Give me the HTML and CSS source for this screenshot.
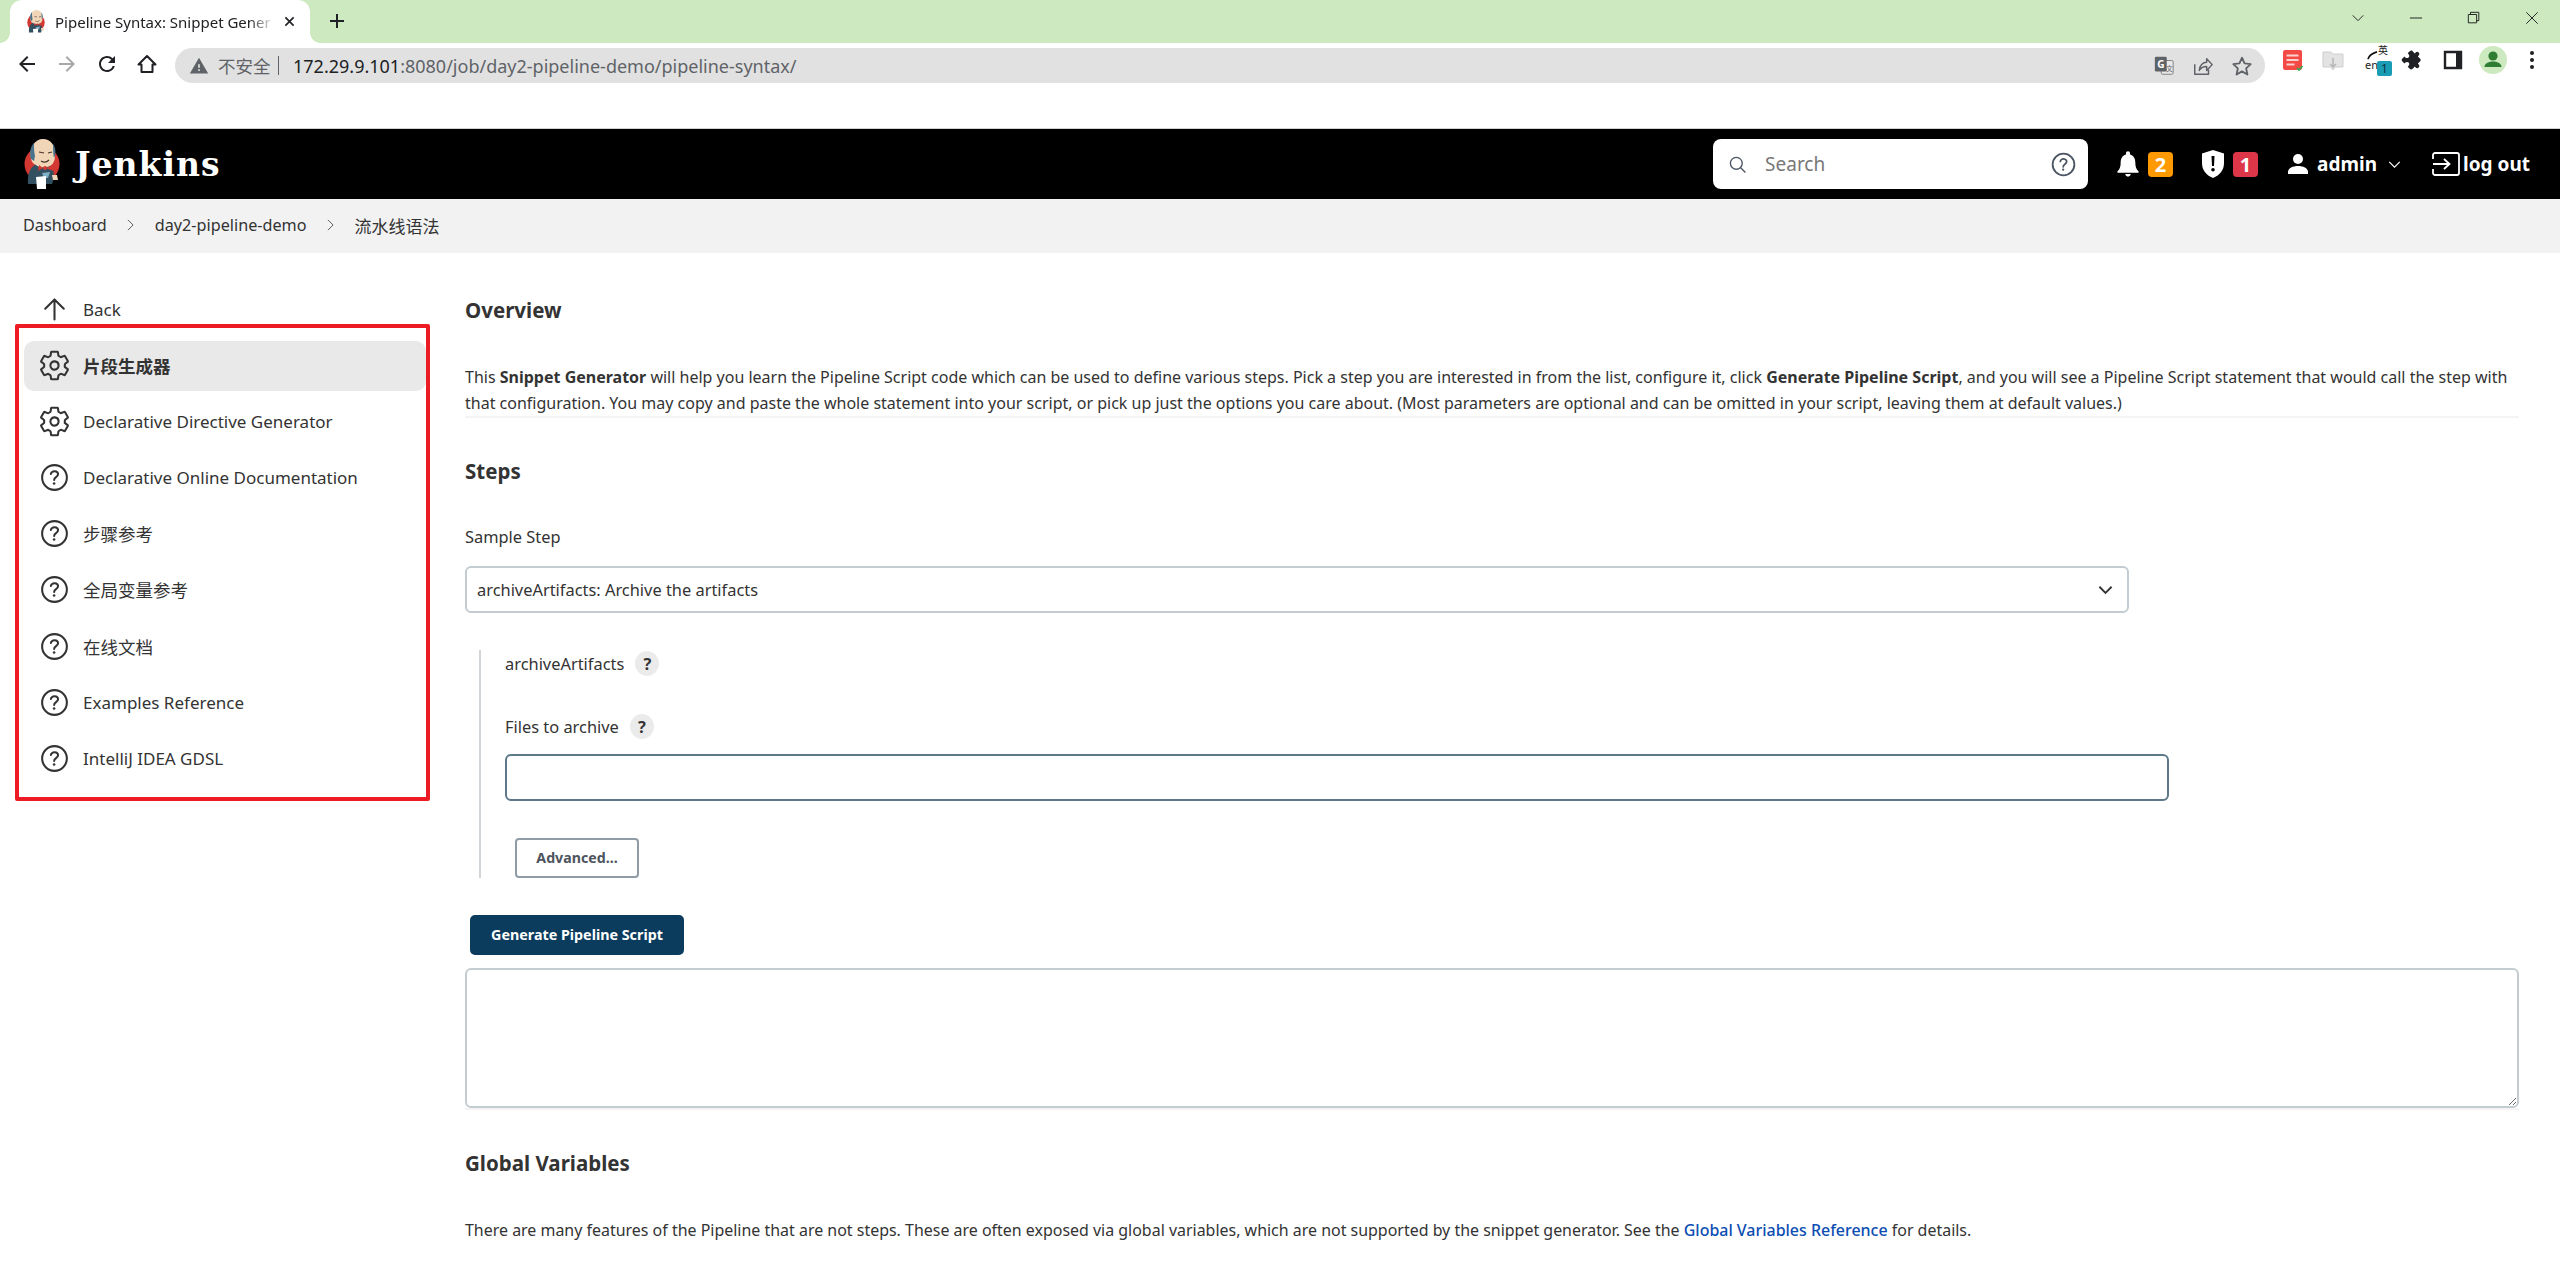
FILE: index.html
```html
<!DOCTYPE html>
<html lang="en">
<head>
<meta charset="utf-8">
<title>Pipeline Syntax: Snippet Generator</title>
<link rel="stylesheet" href="styles.css">
</head>
<body>
<svg class="defs" width="0" height="0" aria-hidden="true">
  <defs>
    <symbol id="butler" viewBox="0 0 40 54">
      <circle cx="20" cy="27" r="17.5" fill="#d33833"/>
      <path d="M6 47 C5 38 8 29 15 27 L29 29 C33 33 32 42 30 47 Z" fill="#335061"/>
      <path d="M9 22 C7 10 13 2 21 2 C29 2 34 9 33 19 C33 25 30 29 25 30 C20 31 16 30 14 28 C11 27 10 25 9 22 Z" fill="#f0d6b7"/>
      <path d="M9 22 C7 15 9 9 12 6 C12 11 12 15 13 19 L12 24 Z" fill="#49728b"/>
      <path d="M31 7 C34 11 34 17 32 21 C31 17 31 12 31 7 Z" fill="#49728b"/>
      <path d="M17 15 L22 16 M26 16 L30 15" stroke="#49322b" stroke-width="1.2" fill="none"/>
      <path d="M19 24 C22 26 25 25 27 23" stroke="#49322b" stroke-width="1.2" fill="none"/>
      <path d="M21 31 L17 28 L16 34 Z M24 31 L31 28 L31 34 Z" fill="#d33833"/>
      <circle cx="23" cy="31" r="2" fill="#d33833"/>
      <path d="M20 36 L28 35 L26 41 L22 41 Z" fill="#81b0c4"/>
      <path d="M14 40 L24 39 L24 52 L15 52 Z" fill="#fff"/>
      <path d="M30 38 L35 38 L36 43 L31 43 Z" fill="#f0d6b7"/>
    </symbol>
    <symbol id="gear" viewBox="0 0 512 512">
      <path fill="none" stroke="currentColor" stroke-width="32" stroke-linecap="round" stroke-linejoin="round" d="M262.29 192.31a64 64 0 1057.4 57.4 64.13 64.13 0 00-57.4-57.4zM416.39 256a154.34 154.34 0 01-1.53 20.79l45.21 35.46a10.81 10.81 0 012.45 13.75l-42.77 74a10.81 10.81 0 01-13.14 4.59l-44.9-18.08a16.11 16.11 0 00-15.17 1.75A164.48 164.48 0 01325 400.8a15.94 15.94 0 00-8.82 12.14l-6.73 47.89a11.08 11.08 0 01-10.68 9.17h-85.54a11.11 11.11 0 01-10.69-8.87l-6.72-47.82a16.07 16.07 0 00-9-12.22 155.3 155.3 0 01-21.46-12.57 16 16 0 00-15.11-1.71l-44.89 18.07a10.81 10.81 0 01-13.14-4.58l-42.77-74a10.8 10.8 0 012.45-13.75l38.21-30a16.05 16.05 0 006-14.08c-.36-4.17-.58-8.33-.58-12.5s.21-8.27.58-12.35a16 16 0 00-6.07-13.94l-38.19-30A10.81 10.81 0 0149.48 186l42.77-74a10.81 10.81 0 0113.14-4.59l44.9 18.08a16.11 16.11 0 0015.17-1.75A164.48 164.48 0 01187 111.2a15.94 15.94 0 008.82-12.14l6.73-47.89A11.08 11.08 0 01213.23 42h85.54a11.11 11.11 0 0110.69 8.87l6.72 47.82a16.07 16.07 0 009 12.22 155.3 155.3 0 0121.46 12.57 16 16 0 0015.11 1.71l44.89-18.07a10.81 10.81 0 0113.14 4.58l42.77 74a10.8 10.8 0 01-2.45 13.75l-38.21 30a16.05 16.05 0 00-6.05 14.08c.33 4.14.55 8.3.55 12.47z"/>
    </symbol>
    <symbol id="help" viewBox="0 0 512 512">
      <path fill="none" stroke="currentColor" stroke-width="32" stroke-miterlimit="10" d="M256 64C150 64 64 150 64 256s86 192 192 192 192-86 192-192S362 64 256 64z"/>
      <path fill="none" stroke="currentColor" stroke-width="32" stroke-linecap="round" stroke-miterlimit="10" d="M200 202.29s.84-17.5 19.57-32.57C230.68 160.77 244 158.18 256 158c10.93-.14 20.69 1.67 26.53 4.45 10 4.76 29.47 16.38 29.47 41.09 0 26-17 37.81-36.37 50.8S251 281.43 251 296"/>
      <circle cx="250" cy="348" r="20" fill="currentColor"/>
    </symbol>
  </defs>
</svg>

<div class="tabstrip">
  <div class="tab">
    <svg class="favicon"><use href="#butler"/></svg>
    <span class="tab-title">Pipeline Syntax: Snippet Gener</span>
    <svg class="tab-close" viewBox="0 0 12 12"><path d="M1.5 1.5l9 9M10.5 1.5l-9 9"/></svg>
  </div>
  <svg class="new-tab" viewBox="0 0 16 16"><path d="M8 1v14M1 8h14"/></svg>
  <div class="window-controls">
    <svg class="win-icon" viewBox="0 0 16 16"><path d="M2 5l6 6 6-6"/></svg>
    <svg class="win-icon" viewBox="0 0 16 16"><path d="M1 8h14"/></svg>
    <svg class="win-icon" viewBox="0 0 16 16"><path d="M4 4V1.5h9.5V11H11M1.5 4H11v9.5H1.5z"/></svg>
    <svg class="win-icon" viewBox="0 0 16 16"><path d="M1.5 1.5l13 13M14.5 1.5l-13 13"/></svg>
  </div>
</div>

<div class="toolbar">
  <div class="nav-buttons">
    <svg class="nav-icon" viewBox="0 0 24 24"><path d="M20 11H7.83l5.59-5.59L12 4l-8 8 8 8 1.41-1.41L7.83 13H20z"/></svg>
    <svg class="nav-icon nav-off" viewBox="0 0 24 24"><path d="M4 11h12.17l-5.59-5.59L12 4l8 8-8 8-1.41-1.41L16.17 13H4z"/></svg>
    <svg class="nav-icon" viewBox="0 0 24 24"><path d="M17.65 6.35A7.958 7.958 0 0012 4c-4.42 0-7.99 3.58-7.99 8s3.57 8 7.99 8c3.73 0 6.84-2.55 7.73-6h-2.08A5.99 5.99 0 0112 18c-3.31 0-6-2.69-6-6s2.69-6 6-6c1.66 0 3.14.69 4.22 1.78L13 11h7V4l-2.35 2.35z"/></svg>
    <svg class="nav-icon nav-home" viewBox="0 0 24 24"><path d="M12 4L3.5 12.5h3V20h11v-7.5h3z"/></svg>
  </div>
  <div class="omnibox">
    <svg class="omni-warning" viewBox="0 0 24 24"><path d="M1 21h22L12 2 1 21zm12-3h-2v-2h2v2zm0-4h-2v-4h2v4z"/></svg>
    <span class="omni-insecure">不安全</span>
    <span class="omni-sep"></span>
    <span class="omni-url"><span class="omni-host">172.29.9.101</span>:8080/job/day2-pipeline-demo/pipeline-syntax/</span>
    <div class="omni-actions">
      <svg class="omni-icon" viewBox="0 0 24 24">
        <rect x="9" y="6" width="13" height="15" rx="1.5" fill="#e8e8e8" stroke="#7d7d7d"/>
        <rect x="2" y="2" width="13" height="16" rx="1.5" fill="#5f6368"/>
        <text x="8.5" y="14" class="omni-g">G</text>
        <text x="18" y="17.5" class="omni-t">文</text>
      </svg>
      <svg class="omni-icon omni-line" viewBox="0 0 24 24"><path d="M3 10v11h15v-5M8 17c0-6 4-9 8-9V4l6 6.5-6 6.5v-4.500c-4 0-6 1-8 4z"/></svg>
      <svg class="omni-icon omni-line omni-star" viewBox="0 0 24 24"><path d="M12 3l2.800 6.200 6.700.8-5 4.600 1.400 6.700L12 17.900l-5.900 3.400 1.400-6.700-5-4.600 6.700-.8z"/></svg>
    </div>
  </div>
  <div class="extensions">
    <svg class="ext-icon" viewBox="0 0 24 24">
      <rect x="3" y="2" width="19" height="20" rx="2" fill="#f44a45"/>
      <path d="M6.500 7.500h12M6.500 12h12M6.500 16.500h8" stroke="#fbd0ce" stroke-width="2"/>
      <path d="M17 20l2 2 3.500-4" stroke="#3aa757" stroke-width="1.800" fill="none"/>
    </svg>
    <svg class="ext-icon" viewBox="0 0 24 24">
      <path d="M2 4h8l2 2h10v13H14l-2 3-2-3H2z" fill="#e3e3e3" stroke="#cfcfcf"/>
      <path d="M12 10v9M9 16l3 3 3-3" stroke="#b5b5b5" stroke-width="1.500" fill="none"/>
    </svg>
    <div class="ext-dict">
      <span class="dict-zh">英</span>
      <span class="dict-en">en</span>
      <svg class="dict-arrow" viewBox="0 0 12 10"><path d="M1 9C2 5 5 3 11 1"/></svg>
      <span class="dict-badge">1</span>
    </div>
    <svg class="ext-icon ext-puzzle" viewBox="0 0 24 24"><path d="M20.5 11H19V7c0-1.100-.9-2-2-2h-4V3.500C13 2.120 11.880 1 10.500 1S8 2.120 8 3.500V5H4c-1.100 0-1.990.9-1.990 2v3.800H3.500c1.490 0 2.700 1.210 2.700 2.700s-1.210 2.700-2.700 2.700H2V20c0 1.100.9 2 2 2h3.800v-1.500c0-1.490 1.210-2.700 2.700-2.700 1.490 0 2.700 1.210 2.700 2.700V22H17c1.100 0 2-.9 2-2v-4h1.500c1.380 0 2.500-1.120 2.500-2.500S21.880 11 20.500 11z"/></svg>
    <svg class="ext-icon" viewBox="0 0 24 24"><path d="M4 4h16v16H4z" fill="none" stroke="#202124" stroke-width="2.400"/><path d="M15 4h5v16h-5z" fill="#202124"/></svg>
    <svg class="avatar" viewBox="0 0 28 28">
      <circle cx="14" cy="14" r="14" fill="#cde9bf"/>
      <circle cx="14" cy="10" r="4.600" fill="#2e7d32"/>
      <path d="M5.500 21c0-4 5-5.500 8.500-5.500s8.500 1.500 8.500 5.500z" fill="#2e7d32"/>
    </svg>
    <svg class="ext-dots" viewBox="0 0 6 24"><circle cx="3" cy="5" r="2"/><circle cx="3" cy="12" r="2"/><circle cx="3" cy="19" r="2"/></svg>
  </div>
</div>
<div class="bookmark-gap"></div>

<header class="page-header">
  <div class="brand">
    <svg class="brand-logo"><use href="#butler"/></svg>
    <span class="brand-name">Jenkins</span>
  </div>
  <div class="header-tools">
    <div class="search-box">
      <svg class="search-icon" viewBox="0 0 24 24"><circle cx="10.500" cy="10.500" r="7.500"/><path d="M16 16l6 6"/></svg>
      <span class="search-placeholder">Search</span>
      <svg class="search-help"><use href="#help"/></svg>
    </div>
    <div class="monitor monitor-bell">
      <svg class="monitor-icon" viewBox="0 0 24 28"><path d="M12 0c1.300 0 2.200.9 2.200 2.200v1.300C18.500 4.600 20 8.500 20 12.500c0 4.500 1 7 3.500 9.500v1.500H.5V22C3 19.500 4 17 4 12.500c0-4 1.500-7.900 5.800-9V2.200C9.800.9 10.700 0 12 0zM9 25h6c0 1.500-1.300 2.800-3 2.800S9 26.500 9 25z"/></svg>
      <span class="badge badge-warn">2</span>
    </div>
    <div class="monitor monitor-shield">
      <svg class="monitor-icon" viewBox="0 0 24 28"><path fill-rule="evenodd" d="M12 0l11 3.500V13c0 7-4 12-11 15C5 25 1 20 1 13V3.500zM10.500 6l.5 10h2l.5-10zM12 18a1.800 1.800 0 100 3.600 1.800 1.800 0 000-3.600z"/></svg>
      <span class="badge badge-danger">1</span>
    </div>
    <div class="user-menu">
      <svg class="user-icon" viewBox="0 0 20 20"><circle cx="10" cy="5" r="5"/><path d="M0 20v-2c0-4 5-6 10-6s10 2 10 6v2z"/></svg>
      <span class="user-name">admin</span>
      <svg class="user-caret" viewBox="0 0 14 8"><path d="M1 1l6 6 6-6"/></svg>
    </div>
    <div class="logout">
      <svg class="logout-icon" viewBox="0 0 28 24"><path d="M1 7V3a2 2 0 012-2h22a2 2 0 012 2v18a2 2 0 01-2 2H3a2 2 0 01-2-2v-4M1 12h16M12 7l5.500 5-5.500 5"/></svg>
      <span class="logout-text">log out</span>
    </div>
  </div>
</header>

<nav class="breadcrumb">
  <span>Dashboard</span>
  <svg class="crumb-sep" viewBox="0 0 8 14"><path d="M1 1l6 6-6 6"/></svg>
  <span>day2-pipeline-demo</span>
  <svg class="crumb-sep" viewBox="0 0 8 14"><path d="M1 1l6 6-6 6"/></svg>
  <span class="crumb-zh">流水线语法</span>
</nav>

<div class="layout">
  <aside class="sidebar">
    <div class="annotation"></div>
    <a class="side-item"><svg class="side-icon" viewBox="0 0 512 512"><path fill="none" stroke="currentColor" stroke-width="32" stroke-linecap="round" stroke-linejoin="round" d="M112 244l144-144 144 144M256 120v292"/></svg><span>Back</span></a>
    <a class="side-item side-active"><svg class="side-icon"><use href="#gear"/></svg><span class="side-zh">片段生成器</span></a>
    <a class="side-item"><svg class="side-icon"><use href="#gear"/></svg><span>Declarative Directive Generator</span></a>
    <a class="side-item"><svg class="side-icon"><use href="#help"/></svg><span>Declarative Online Documentation</span></a>
    <a class="side-item"><svg class="side-icon"><use href="#help"/></svg><span class="side-zh">步骤参考</span></a>
    <a class="side-item"><svg class="side-icon"><use href="#help"/></svg><span class="side-zh">全局变量参考</span></a>
    <a class="side-item"><svg class="side-icon"><use href="#help"/></svg><span class="side-zh">在线文档</span></a>
    <a class="side-item"><svg class="side-icon"><use href="#help"/></svg><span>Examples Reference</span></a>
    <a class="side-item"><svg class="side-icon"><use href="#help"/></svg><span>IntelliJ IDEA GDSL</span></a>
  </aside>

  <main class="content">
    <h2 class="section-title">Overview</h2>
    <p class="intro">This <strong>Snippet Generator</strong> will help you learn the Pipeline Script code which can be used to define various steps. Pick a step you are interested in from the list, configure it, click <strong>Generate Pipeline Script</strong>, and you will see a Pipeline Script statement that would call the step with<br>that configuration. You may copy and paste the whole statement into your script, or pick up just the options you care about. (Most parameters are optional and can be omitted in your script, leaving them at default values.)</p>

    <h2 class="section-title steps-title">Steps</h2>
    <div class="field-label sample-label">Sample Step</div>
    <div class="select-wrap">
      <select class="step-select"><option>archiveArtifacts: Archive the artifacts</option></select>
      <svg class="select-caret" viewBox="0 0 16 10"><path d="M1.500 1.500L8 8l6.500-6.500"/></svg>
    </div>

    <div class="step-config">
      <div class="config-row"><span>archiveArtifacts</span><span class="help-dot">?</span></div>
      <div class="config-row files-row"><span>Files to archive</span><span class="help-dot">?</span></div>
      <input class="files-input" type="text">
      <button class="btn-advanced" type="button">Advanced...</button>
    </div>

    <button class="btn-generate" type="button">Generate Pipeline Script</button>
    <div class="output-wrap"><textarea class="snippet-output" readonly></textarea></div>

    <h2 class="section-title globals-title">Global Variables</h2>
    <p class="globals-text">There are many features of the Pipeline that are not steps. These are often exposed via global variables, which are not supported by the snippet generator. See the <a class="link">Global Variables Reference</a> for details.</p>
  </main>
</div>
</body>
</html>
```

FILE: styles.css
```css
* { box-sizing: border-box; }

html, body {
  margin: 0;
  padding: 0;
  width: 2560px;
  height: 1288px;
  overflow: hidden;
  background: #fff;
  color: #333;
  font-family: "Noto Sans", "Noto Sans CJK SC", sans-serif;
  font-size: 16px;
}

.defs { position: absolute; }

/* Browser chrome */
.tabstrip {
  height: 43px;
  background: #cce9bf;
  display: flex;
  align-items: flex-start;
  padding-left: 10px;
}

.tab {
  position: relative;
  width: 300px;
  height: 43px;
  background: #fff;
  border-radius: 12px 12px 0 0;
  display: flex;
  align-items: center;
  padding-left: 16px;
}

.tab::before,
.tab::after {
  content: "";
  position: absolute;
  bottom: 0;
  width: 10px;
  height: 10px;
}

.tab::before {
  left: -10px;
  background: radial-gradient(circle at 0 0, transparent 9.5px, #fff 10px);
}

.tab::after {
  right: -10px;
  background: radial-gradient(circle at 100% 0, transparent 9.5px, #fff 10px);
}

.favicon { width: 20px; height: 27px; flex: none; margin-top: 2px; }

.tab-title {
  margin-left: 9px;
  width: 220px;
  white-space: nowrap;
  font-size: 15px;
  color: #202124;
  -webkit-mask-image: linear-gradient(to right, #000 88%, transparent 100%);
  mask-image: linear-gradient(to right, #000 88%, transparent 100%);
}

.tab-close {
  width: 11px;
  height: 11px;
  margin-left: 9px;
  fill: none;
  stroke: #202124;
  stroke-width: 1.8;
}

.new-tab {
  width: 16px;
  height: 16px;
  margin: 13px 0 0 19px;
  fill: none;
  stroke: #202124;
  stroke-width: 2;
}

.window-controls {
  margin-left: auto;
  display: flex;
  gap: 44px;
  padding: 11px 21px 0 0;
}

.win-icon {
  width: 14px;
  height: 14px;
  fill: none;
  stroke: #222;
  stroke-width: 1.100;
}

.toolbar {
  height: 41px;
  background: #fff;
  display: flex;
  align-items: flex-start;
}

.nav-buttons {
  width: 175px;
  flex: none;
  display: flex;
  gap: 16px;
  padding: 9px 0 0 15px;
}

.nav-icon { width: 24px; height: 24px; fill: #202124; flex: none; }
.nav-off { fill: #a9a9a9; }
.nav-home { fill: none; stroke: #202124; stroke-width: 2; stroke-linejoin: round; }

.omnibox {
  width: 2090px;
  height: 35px;
  margin-top: 5px;
  flex: none;
  background: #e1e1e1;
  border-radius: 18px;
  display: flex;
  align-items: center;
  padding-left: 14px;
  font-size: 18px;
}

.omni-warning { width: 20px; height: 20px; fill: #5f6368; flex: none; }
.omni-insecure { margin-left: 9px; font-size: 17.5px; color: #5f6368; }
.omni-sep { width: 1px; height: 19px; margin: 0 14.500px 0 7px; background: #5f6368; }
.omni-url { color: #5f6368; white-space: nowrap; }
.omni-host { color: #202124; }

.omni-actions {
  margin-left: auto;
  display: flex;
  gap: 17px;
  padding-right: 12px;
}

.omni-icon { width: 22px; height: 22px; flex: none; }
.omni-line { fill: none; stroke: #5f6368; stroke-width: 1.600; stroke-linejoin: round; }
.omni-star { stroke-width: 2; }
.omni-g { font-size: 11px; font-weight: 700; fill: #fff; text-anchor: middle; font-family: "Noto Sans", sans-serif; }
.omni-t { font-size: 7px; fill: #5f6368; text-anchor: middle; font-family: "Noto Sans CJK SC", sans-serif; }

.extensions {
  flex: 1;
  display: flex;
  align-items: center;
  padding: 2px 0 0 15px;
  gap: 17px;
}

.ext-icon { width: 24px; height: 24px; flex: none; }
.ext-puzzle { fill: #202124; transform: rotate(45deg) scale(0.85); margin-right: -1px; }
.ext-dict { position: relative; width: 24px; height: 30px; flex: none; margin: 0 -5px 0 3px; }
.dict-zh { position: absolute; left: 13px; top: 0; font-size: 10px; line-height: 11px; color: #222; }
.dict-en { position: absolute; left: 0; top: 13px; font-size: 11px; line-height: 13px; color: #222; }
.dict-arrow { position: absolute; left: 1px; top: 6px; width: 13px; height: 9px; fill: none; stroke: #111; stroke-width: 2; }
.dict-badge {
  position: absolute;
  left: 12px;
  top: 16px;
  width: 15px;
  height: 15px;
  background: #1a9cb4;
  border-radius: 2px;
  font-size: 12px;
  line-height: 15px;
  text-align: center;
  color: #0d3340;
}
.avatar { width: 28px; height: 28px; flex: none; margin-left: -3px; }
.ext-dots { width: 6px; height: 24px; flex: none; fill: #202124; margin-left: 5px; }

.bookmark-gap { height: 45px; background: #fff; border-bottom: 1px solid #d0d0d0; }

/* Jenkins header */
.page-header {
  height: 70px;
  background: #000;
  display: flex;
  align-items: center;
  padding: 0 30px 0 22px;
  color: #fff;
}

.brand { display: flex; align-items: center; }
.brand-logo { width: 40px; height: 54px; flex: none; }
.brand-name {
  margin-left: 13px;
  font-family: "DejaVu Serif", serif;
  font-weight: 700;
  font-size: 33px;
  letter-spacing: 1px;
}

.header-tools { margin-left: auto; display: flex; align-items: center; }

.search-box {
  width: 375px;
  height: 50px;
  background: #fff;
  border-radius: 8px;
  display: flex;
  align-items: center;
  padding: 0 10px 0 15px;
  color: #4b5563;
}

.search-icon { width: 19px; height: 19px; fill: none; stroke: #4b5563; stroke-width: 1.700; flex: none; }
.search-placeholder { margin-left: 18px; font-size: 19px; color: #777; }
.search-help { width: 29px; height: 29px; margin-left: auto; }

.monitor { display: flex; align-items: center; flex: none; }
.monitor-bell { margin-left: 29px; }
.monitor-shield { margin-left: 28px; }
.monitor-icon { width: 24px; height: 28px; fill: #fff; }
.monitor-bell .monitor-icon { width: 22px; height: 26px; }
.badge {
  width: 25px;
  height: 25px;
  margin-left: 9px;
  border-radius: 4px;
  font-size: 20px;
  line-height: 25px;
  font-weight: 700;
  text-align: center;
  color: #fff;
}
.monitor-shield .badge { margin-left: 8px; }
.badge-warn { background: #fe9a00; }
.badge-danger { background: #dd3649; }

.user-menu { margin-left: 30px; display: flex; align-items: center; }
.user-icon { width: 20px; height: 20px; fill: #fff; }
.user-name { margin-left: 9px; font-size: 19px; font-weight: 700; }
.user-caret { width: 13px; height: 7px; margin-left: 10.500px; fill: none; stroke: #fff; stroke-width: 1.400; }

.logout { margin-left: 31.500px; display: flex; align-items: center; }
.logout-icon { width: 28px; height: 24px; fill: none; stroke: #fff; stroke-width: 1.800; }
.logout-text { margin-left: 3px; font-size: 19px; font-weight: 700; }

/* Breadcrumb */
.breadcrumb {
  height: 54px;
  background: #f2f2f2;
  display: flex;
  align-items: center;
  padding: 0 0 2px 23px;
  font-size: 16.200px;
  color: #333;
}

.crumb-zh { font-size: 17px; }
.crumb-sep { width: 7px; height: 12px; margin: 0 20.500px; fill: none; stroke: #555; stroke-width: 1.100; }

/* Layout */
.layout { display: flex; align-items: flex-start; }

.sidebar {
  position: relative;
  width: 465px;
  flex: none;
  padding: 32px 0 0 24px;
  display: flex;
  flex-direction: column;
  gap: 6.200px;
}

.annotation {
  position: absolute;
  left: 15px;
  top: 71px;
  width: 415px;
  height: 477px;
  border: 4px solid #ed1c24;
  border-radius: 2px;
  pointer-events: none;
}

.side-item {
  width: 402px;
  height: 50px;
  display: flex;
  align-items: center;
  gap: 12.500px;
  padding: 0 0 2px 13.500px;
  border-radius: 10px;
  font-size: 17px;
  color: #333;
}

.side-zh { font-size: 17.500px; }
.side-active { background: #e9e9e9; font-weight: 700; }
.side-icon { width: 33px; height: 33px; flex: none; color: #333; }

.content { width: 2054px; padding-top: 43px; }

.section-title { margin: 0; font-size: 20.500px; line-height: 28px; font-weight: 700; color: #333; }

.intro {
  margin: 40px 0 0;
  line-height: 26px;
  white-space: nowrap;
  border-bottom: 2px solid #f4f4f4;
}

.steps-title { margin-top: 39px; }

.field-label { font-size: 16.400px; line-height: 24px; }
.sample-label { margin-top: 40px; }

.select-wrap { position: relative; margin-top: 17px; width: 1664px; }

.step-select {
  display: block;
  width: 100%;
  height: 47px;
  padding: 0 10px;
  border: 2px solid #c3ccd1;
  border-radius: 6px;
  background: #fff;
  appearance: none;
  -webkit-appearance: none;
  font: inherit;
  font-size: 16.400px;
  color: #333;
}

.select-caret {
  position: absolute;
  right: 16px;
  top: 19px;
  width: 15px;
  height: 10px;
  fill: none;
  stroke: #333;
  stroke-width: 2;
}

.step-config {
  margin: 37px 0 0 14px;
  padding-left: 24px;
  border-left: 2px solid #ced4d8;
  display: flex;
  flex-direction: column;
  align-items: flex-start;
  font-size: 16.400px;
}

.config-row { display: flex; align-items: center; gap: 11px; height: 26px; }
.files-row { margin-top: 37.500px; }

.help-dot {
  width: 24px;
  height: 25px;
  border-radius: 50%;
  background: #ebebeb;
  font-weight: 700;
  line-height: 25px;
  text-align: center;
  color: #333;
}

.files-input {
  display: block;
  width: 1664px;
  height: 47px;
  margin-top: 14px;
  border: 2px solid #5c7889;
  border-radius: 6px;
  background: #fff;
  font: inherit;
}

.btn-advanced {
  width: 124px;
  height: 40px;
  margin: 37px 0 0 10px;
  padding: 0;
  border: 2px solid #8f9ca6;
  border-radius: 4px;
  background: #fff;
  font: 700 14.200px "Noto Sans", sans-serif;
  color: #4d545d;
}

.btn-generate {
  display: block;
  width: 214px;
  height: 40px;
  margin: 37px 0 0 5px;
  padding: 0;
  border: 0;
  border-radius: 5px;
  background: #0b3c5d;
  font: 700 14.300px "Noto Sans", sans-serif;
  color: #fff;
}

.output-wrap { margin-top: 13px; border-bottom: 2px solid #f4f4f4; }

.snippet-output {
  display: block;
  width: 2054px;
  height: 140px;
  border: 2px solid #c3ccd1;
  border-radius: 6px;
  background: #fff;
  font: inherit;
}

.globals-title { margin-top: 39px; }
.globals-text { margin: 40px 0 0; font-size: 15.960px; line-height: 26px; white-space: nowrap; }
.link { color: #0b4db3; font-weight: 500; }
```
